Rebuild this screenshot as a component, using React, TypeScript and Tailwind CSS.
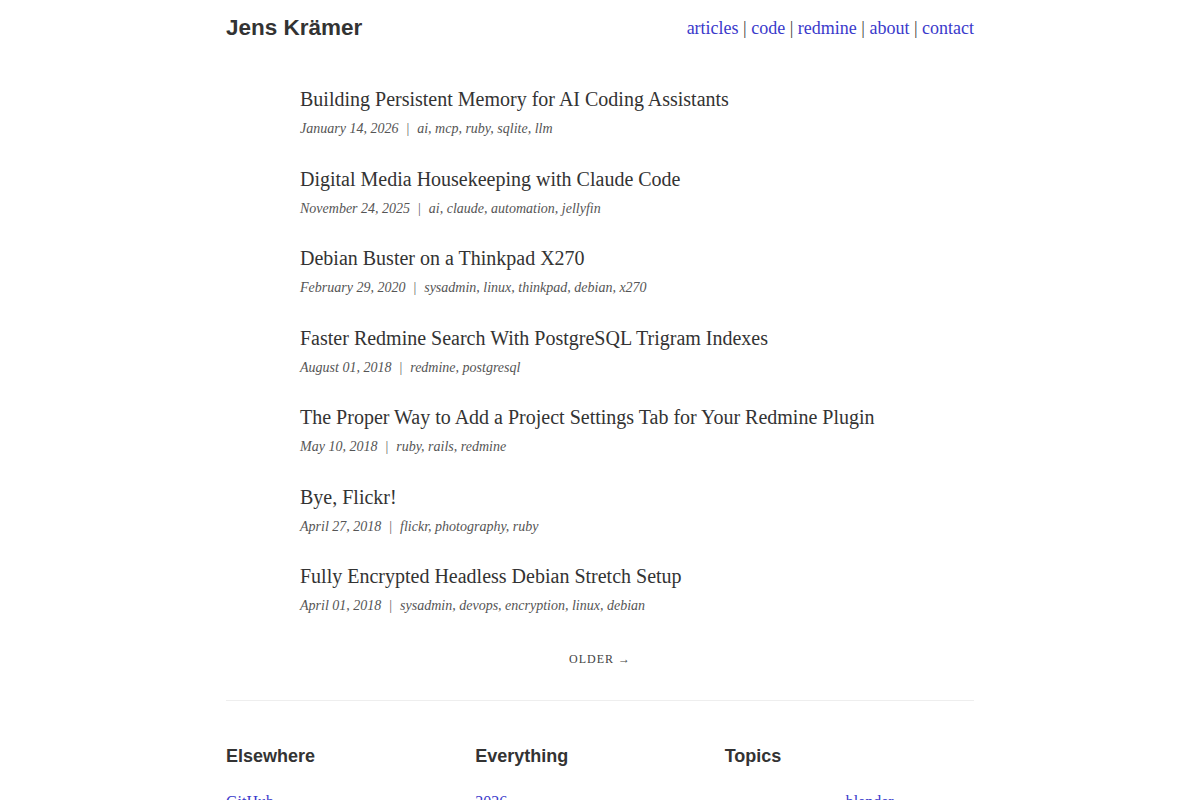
import React from 'react';

type Post = {
  title: string;
  date: string;
  tags: string[];
};

const posts: Post[] = [
  { title: 'Building Persistent Memory for AI Coding Assistants', date: 'January 14, 2026', tags: ['ai', 'mcp', 'ruby', 'sqlite', 'llm'] },
  { title: 'Digital Media Housekeeping with Claude Code', date: 'November 24, 2025', tags: ['ai', 'claude', 'automation', 'jellyfin'] },
  { title: 'Debian Buster on a Thinkpad X270', date: 'February 29, 2020', tags: ['sysadmin', 'linux', 'thinkpad', 'debian', 'x270'] },
  { title: 'Faster Redmine Search With PostgreSQL Trigram Indexes', date: 'August 01, 2018', tags: ['redmine', 'postgresql'] },
  { title: 'The Proper Way to Add a Project Settings Tab for Your Redmine Plugin', date: 'May 10, 2018', tags: ['ruby', 'rails', 'redmine'] },
  { title: 'Bye, Flickr!', date: 'April 27, 2018', tags: ['flickr', 'photography', 'ruby'] },
  { title: 'Fully Encrypted Headless Debian Stretch Setup', date: 'April 01, 2018', tags: ['sysadmin', 'devops', 'encryption', 'linux', 'debian'] },
];

const navItems = ['articles', 'code', 'redmine', 'about', 'contact'];

const serif = "font-['Liberation_Serif',serif]";
const sans = "font-['Liberation_Sans',Arial,sans-serif]";

const PostItem: React.FC<{ post: Post }> = ({ post }) => (
  <article className="mb-[25.5px]">
    <h2 className={`${serif} text-[20px] leading-[28px] text-[#333]`}>
      <a href="#">{post.title}</a>
    </h2>
    <div className={`${serif} mt-[6px] text-[14px] leading-[20px] italic text-[#555]`}>
      {post.date}
      <span className="mx-[8px] not-italic text-[#666]">|</span>
      {post.tags.join(', ')}
    </div>
  </article>
);

export default function App() {
  return (
    <div className="min-h-screen bg-white">
      <div className="mx-auto w-[748px]">
        {/* Site header */}
        <header className="flex h-[56px] items-center justify-between">
          <a href="#" className={`${sans} text-[22.5px] font-bold text-[#333]`}>
            Jens Krämer
          </a>
          <nav className={`${serif} text-[18px] text-[#3a3acb]`}>
            {navItems.map((item, i) => (
              <React.Fragment key={item}>
                {i > 0 && <span className="text-[#444]"> | </span>}
                <a href="#">{item}</a>
              </React.Fragment>
            ))}
          </nav>
        </header>

        {/* Article list */}
        <main className="pt-[29px]">
          <div className="pl-[74px]">
            {posts.map((p) => (
              <PostItem key={p.title} post={p} />
            ))}
          </div>
          <div className="mt-[34.5px] flex justify-center">
            <a href="#" className={`${serif} text-[12px] leading-[16px] tracking-[1px] text-[#444]`}>
              OLDER →
            </a>
          </div>
        </main>

        <hr className="mt-[33px] border-t border-[#eeeeee]" />

        {/* Footer columns */}
        <footer className="grid grid-cols-3 pt-[43px]">
          <div>
            <h3 className={`${sans} text-[18px] leading-[24px] font-bold text-[#333]`}>Elsewhere</h3>
            <ul className={`${serif} mt-[22px] text-[16px] leading-[24px] text-[#3a3acb]`}>
              <li><a href="#">GitHub</a></li>
              <li><a href="#">Mastodon</a></li>
            </ul>
          </div>
          <div>
            <h3 className={`${sans} text-[18px] leading-[24px] font-bold text-[#333]`}>Everything</h3>
            <ul className={`${serif} mt-[22px] text-[16px] leading-[24px] text-[#3a3acb]`}>
              <li><a href="#">2026</a></li>
              <li><a href="#">2025</a></li>
            </ul>
          </div>
          <div>
            <h3 className={`${sans} text-[18px] leading-[24px] font-bold text-[#333]`}>Topics</h3>
            <div className={`${serif} mt-[22px] pl-[121px] text-[16px] leading-[24px] text-[#3a3acb]`}>
              <a href="#">blender</a>
            </div>
          </div>
        </footer>
      </div>
    </div>
  );
}
